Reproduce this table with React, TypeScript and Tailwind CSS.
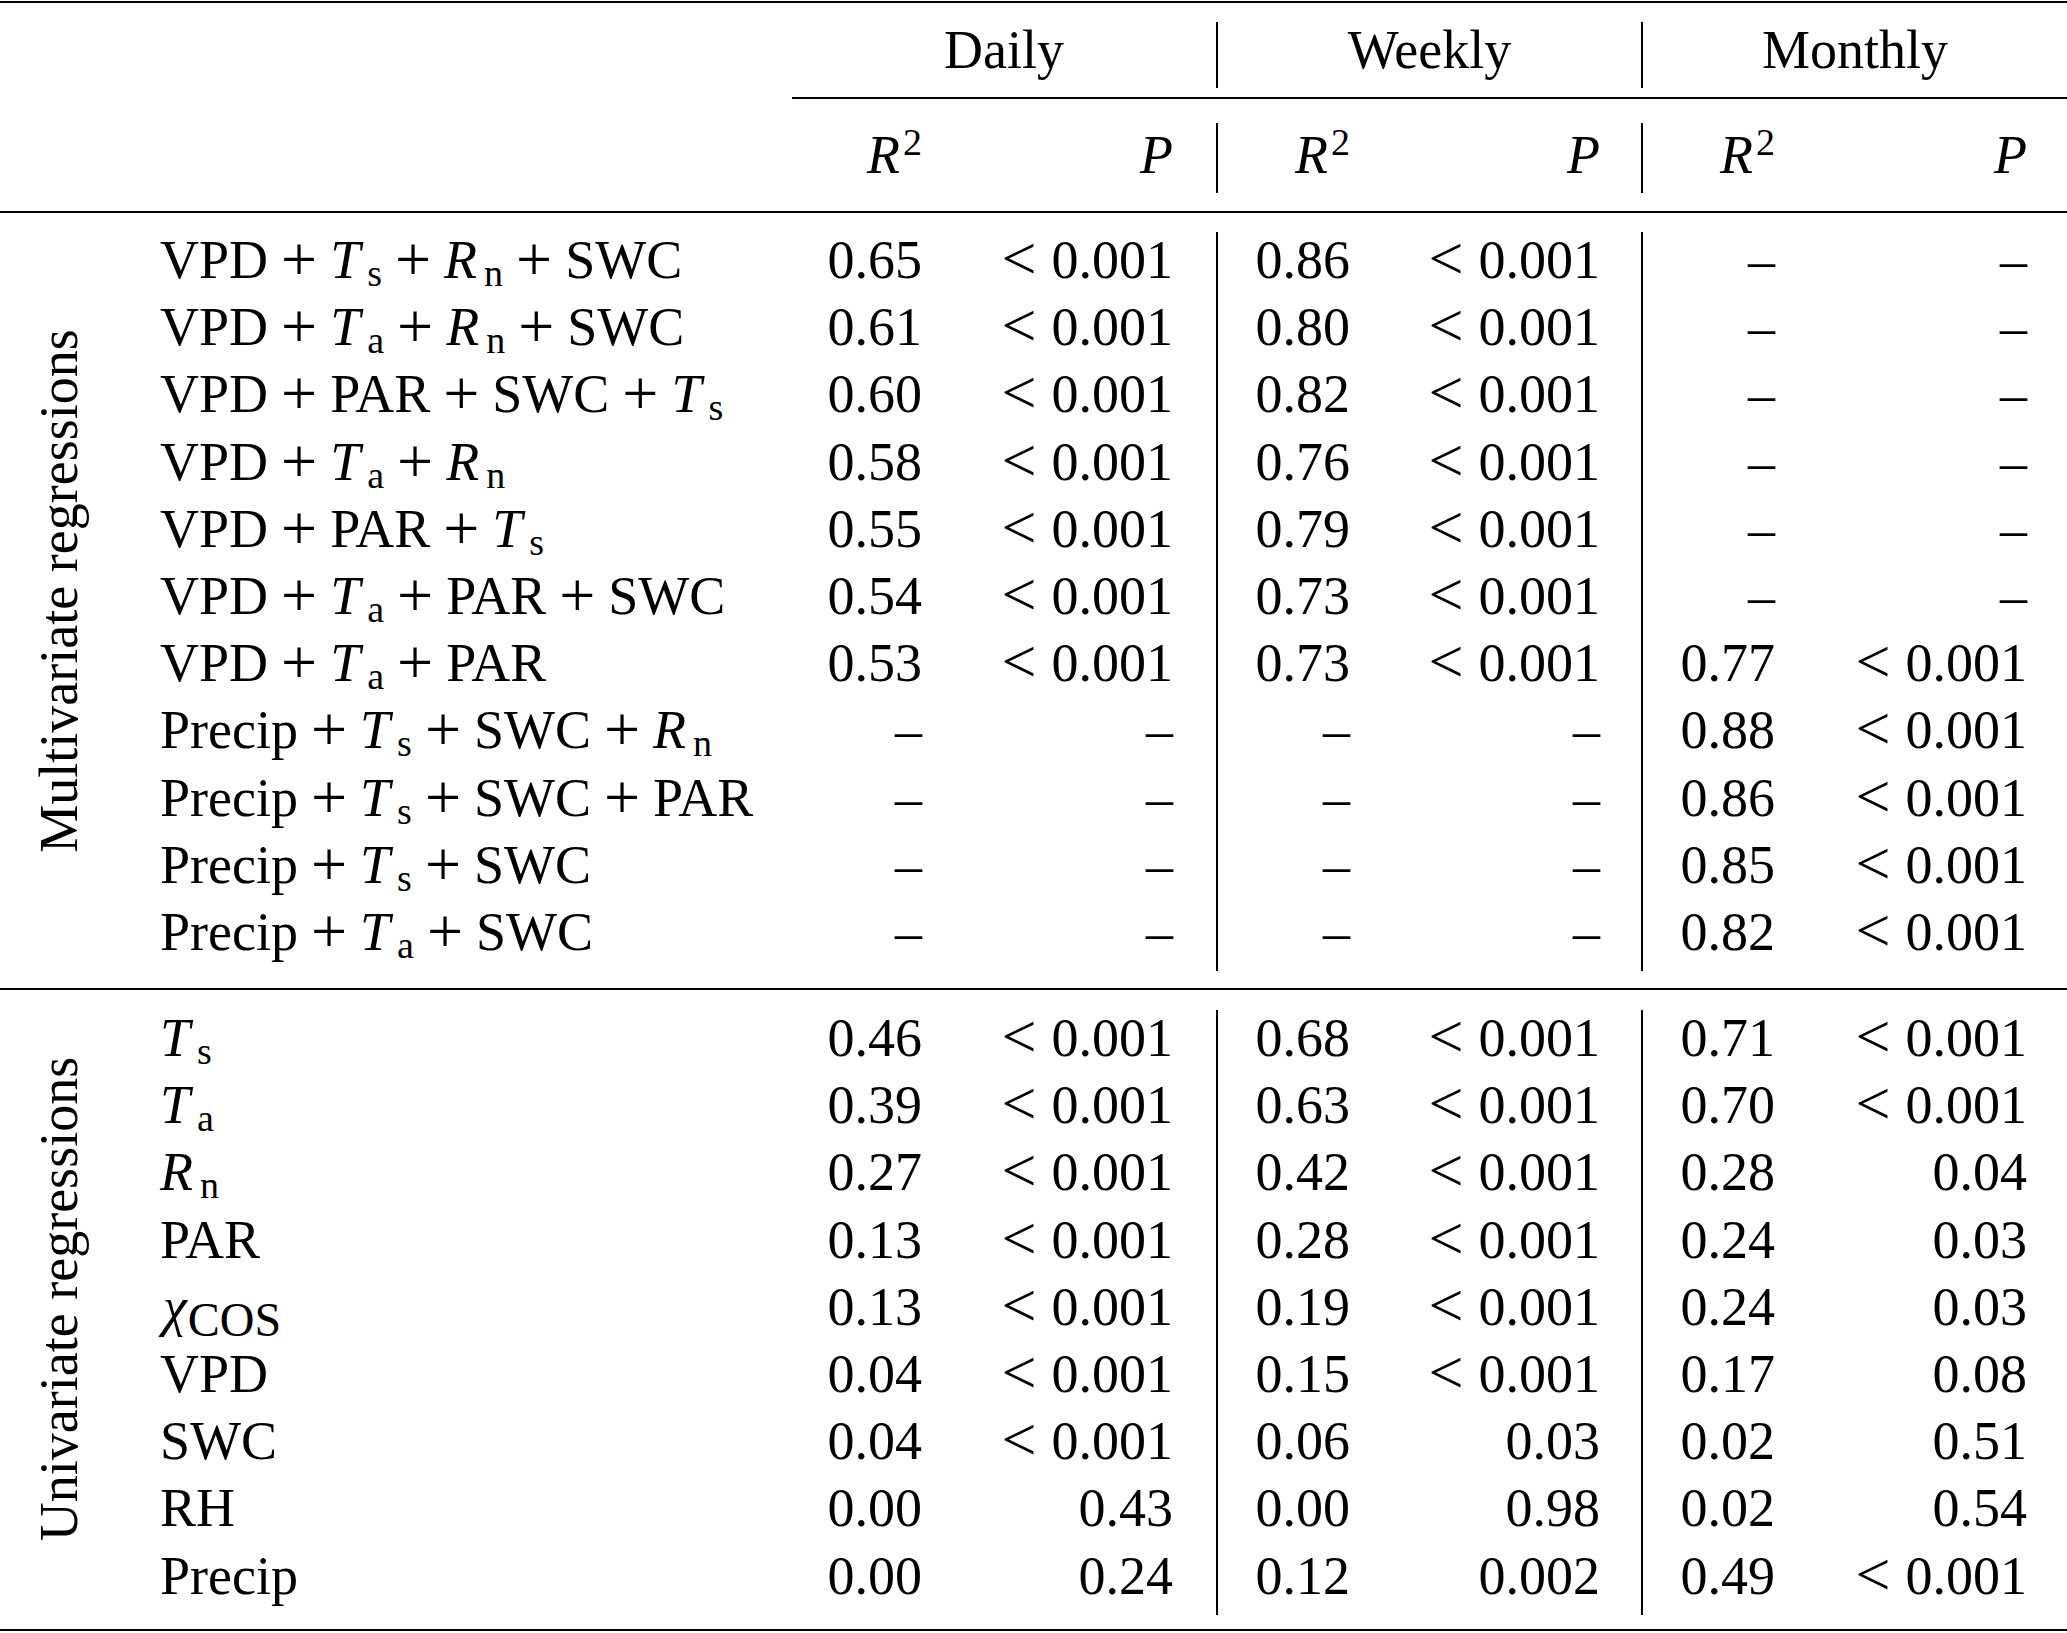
import React, { Fragment } from "react";

type Term = string | [string, string];

const Plus = () => (
  <span className="mx-[13px] text-[64px] leading-[40px] align-[-3px]">+</span>
);

const Sub = ({ b, s }: { b: string; s: string }) => {
  if (b === "χ") {
    return (
      <span className="whitespace-nowrap pl-[3px]">
        <span className="italic">χ</span>
        <span className="ml-[1px] text-[48px] leading-none align-[-11px]">{s}</span>
      </span>
    );
  }
  return (
    <span className="whitespace-nowrap">
      <span className="italic">{b}</span>
      <span className="ml-[7px] text-[38px] leading-none align-[-8px]">{s}</span>
    </span>
  );
};

const Label = ({ terms }: { terms: Term[] }) => (
  <>
    {terms.map((t, i) => (
      <Fragment key={i}>
        {i > 0 && <Plus />}
        {typeof t === "string" ? t : <Sub b={t[0]} s={t[1]} />}
      </Fragment>
    ))}
  </>
);

const Val = ({ v }: { v: string }) => {
  if (v === "-") return <>–</>;
  if (v.startsWith("<")) {
    return (
      <>
        <span className="mr-[15px] text-[62px] leading-[40px] align-[-1px]">&lt;</span>
        {v.slice(1)}
      </>
    );
  }
  return <>{v}</>;
};

type RowData = { terms: Term[]; v: string[] };

const Ts: Term = ["T", "s"];
const Ta: Term = ["T", "a"];
const Rn: Term = ["R", "n"];

const multi: RowData[] = [
  { terms: ["VPD", Ts, Rn, "SWC"], v: ["0.65", "<0.001", "0.86", "<0.001", "-", "-"] },
  { terms: ["VPD", Ta, Rn, "SWC"], v: ["0.61", "<0.001", "0.80", "<0.001", "-", "-"] },
  { terms: ["VPD", "PAR", "SWC", Ts], v: ["0.60", "<0.001", "0.82", "<0.001", "-", "-"] },
  { terms: ["VPD", Ta, Rn], v: ["0.58", "<0.001", "0.76", "<0.001", "-", "-"] },
  { terms: ["VPD", "PAR", Ts], v: ["0.55", "<0.001", "0.79", "<0.001", "-", "-"] },
  { terms: ["VPD", Ta, "PAR", "SWC"], v: ["0.54", "<0.001", "0.73", "<0.001", "-", "-"] },
  { terms: ["VPD", Ta, "PAR"], v: ["0.53", "<0.001", "0.73", "<0.001", "0.77", "<0.001"] },
  { terms: ["Precip", Ts, "SWC", Rn], v: ["-", "-", "-", "-", "0.88", "<0.001"] },
  { terms: ["Precip", Ts, "SWC", "PAR"], v: ["-", "-", "-", "-", "0.86", "<0.001"] },
  { terms: ["Precip", Ts, "SWC"], v: ["-", "-", "-", "-", "0.85", "<0.001"] },
  { terms: ["Precip", Ta, "SWC"], v: ["-", "-", "-", "-", "0.82", "<0.001"] },
];

const uni: RowData[] = [
  { terms: [Ts], v: ["0.46", "<0.001", "0.68", "<0.001", "0.71", "<0.001"] },
  { terms: [Ta], v: ["0.39", "<0.001", "0.63", "<0.001", "0.70", "<0.001"] },
  { terms: [Rn], v: ["0.27", "<0.001", "0.42", "<0.001", "0.28", "0.04"] },
  { terms: ["PAR"], v: ["0.13", "<0.001", "0.28", "<0.001", "0.24", "0.03"] },
  { terms: [["χ", "COS"]], v: ["0.13", "<0.001", "0.19", "<0.001", "0.24", "0.03"] },
  { terms: ["VPD"], v: ["0.04", "<0.001", "0.15", "<0.001", "0.17", "0.08"] },
  { terms: ["SWC"], v: ["0.04", "<0.001", "0.06", "0.03", "0.02", "0.51"] },
  { terms: ["RH"], v: ["0.00", "0.43", "0.00", "0.98", "0.02", "0.54"] },
  { terms: ["Precip"], v: ["0.00", "0.24", "0.12", "0.002", "0.49", "<0.001"] },
];

const Groups = ({ v }: { v: React.ReactNode[] }) => (
  <>
    <div className="flex w-[424px] shrink-0">
      <div className="w-[130px] text-right">{v[0]}</div>
      <div className="w-[251px] text-right">{v[1]}</div>
    </div>
    <div className="flex w-[425px] shrink-0 border-l-2 border-black">
      <div className="w-[132px] text-right">{v[2]}</div>
      <div className="w-[250px] text-right">{v[3]}</div>
    </div>
    <div className="flex w-[426px] shrink-0 border-l-2 border-black">
      <div className="w-[132px] text-right">{v[4]}</div>
      <div className="w-[252px] text-right">{v[5]}</div>
    </div>
  </>
);

const DataRow = ({ r }: { r: RowData }) => (
  <div className="flex h-[67.2px] leading-[56px]">
    <div className="w-[674px] shrink-0 whitespace-nowrap pl-[42px]">
      <Label terms={r.terms} />
    </div>
    <Groups v={r.v.map((x, i) => <Val key={i} v={x} />)} />
  </div>
);

const R2 = () => (
  <>
    <span className="italic">R</span>
    <span className="ml-[3px] text-[38px] leading-none align-[18px]">2</span>
  </>
);
const P = () => <span className="italic">P</span>;

export default function App() {
  return (
    <div className="w-[2067px] bg-white text-black font-['Liberation_Serif','Times_New_Roman',serif] text-[54px]">
      <div className="pt-[1px]">
        <div className="h-[2px] bg-black" />
      </div>

      <div className="pt-[19px] pb-[9px]">
        <div className="flex h-[66px] leading-[56px]">
          <div className="w-[792px] shrink-0" />
          <div className="w-[424px] shrink-0 text-center">Daily</div>
          <div className="w-[425px] shrink-0 border-l-2 border-black text-center">Weekly</div>
          <div className="w-[426px] shrink-0 border-l-2 border-black text-center">Monthly</div>
        </div>
      </div>

      <div className="flex">
        <div className="w-[792px] shrink-0" />
        <div className="h-[2px] flex-1 bg-black" />
      </div>

      <div className="pt-[24px] pb-[18px]">
        <div className="flex h-[70px] leading-[64px]">
          <div className="w-[792px] shrink-0" />
          <Groups v={[<R2 key="a" />, <P key="b" />, <R2 key="c" />, <P key="d" />, <R2 key="e" />, <P key="f" />]} />
        </div>
      </div>

      <div className="h-[2px] bg-black" />

      <div className="flex">
        <div className="flex w-[118px] shrink-0 items-center justify-center pb-[20px]">
          <div className="-rotate-90 whitespace-nowrap leading-[54px]">Multivariate regressions</div>
        </div>
        <div className="flex shrink-0 flex-col pt-[19px] pb-[17px]">
          {multi.map((r, i) => (
            <DataRow key={i} r={r} />
          ))}
        </div>
      </div>

      <div className="h-[2px] bg-black" />

      <div className="flex">
        <div className="flex w-[118px] shrink-0 items-center justify-center pb-[20px]">
          <div className="-rotate-90 whitespace-nowrap leading-[54px]">Univariate regressions</div>
        </div>
        <div className="flex shrink-0 flex-col pt-[20px] pb-[14px]">
          {uni.map((r, i) => (
            <DataRow key={i} r={r} />
          ))}
        </div>
      </div>

      <div className="h-[2px] bg-black" />
    </div>
  );
}
